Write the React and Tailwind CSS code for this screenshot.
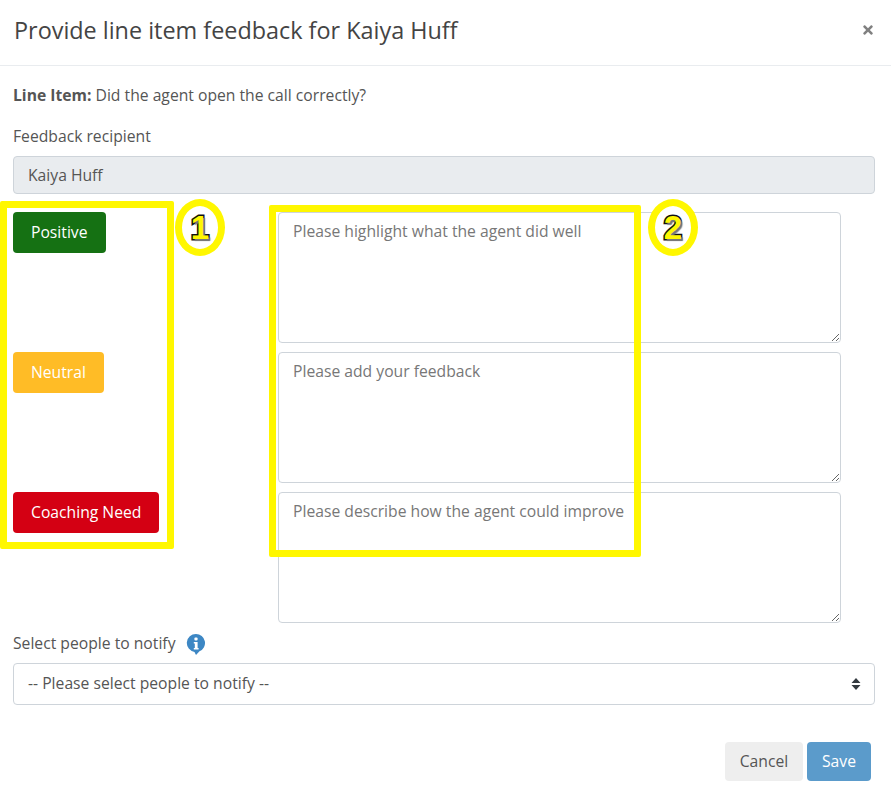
import React from 'react';
import { FaTimes } from 'react-icons/fa';

const rows = [
    { label: 'Positive', color: 'bg-[#157113]', placeholder: 'Please highlight what the agent did well' },
    { label: 'Neutral', color: 'bg-[#ffbc26]', placeholder: 'Please add your feedback' },
    { label: 'Coaching Need', color: 'bg-[#d40013]', placeholder: 'Please describe how the agent could improve' },
];

const Callout = ({ number, className }) => (
    <div className={`absolute w-[50px] h-[57px] rounded-[50%] border-[7px] border-[#fff700] bg-white flex items-center justify-center ${className}`}>
        <span className="font-['Liberation_Sans',sans-serif] font-bold text-[33px] leading-none text-[#fff700] [-webkit-text-stroke:3px_#111] [paint-order:stroke_fill] [text-shadow:2px_2px_1px_#777]">
            {number}
        </span>
    </div>
);

const App = () => {
    return (
        <div className="relative w-[891px] h-[795px] overflow-hidden bg-white text-[#555] text-[15.7px] font-['Open_Sans',sans-serif]">
            <div className="h-[66px] border-b border-[#e9ecef] pl-[14px] pr-[16px] flex items-center justify-between">
                <h1 className="text-[23.4px] text-[#444] font-normal mb-[3px]">Provide line item feedback for Kaiya Huff</h1>
                <FaTimes className="text-[#808080] text-[14px] mb-[6px]" />
            </div>

            <div className="px-[13px] pt-[17px]">
                <p className="leading-[24px] h-[24px]">
                    <strong className="font-bold">Line Item:</strong> Did the agent open the call correctly?
                </p>
                <label className="block mt-[17px] leading-[24px]">Feedback recipient</label>
                <div className="mt-[8px] h-[38px] w-[862px] rounded border border-[#ced4da] bg-[#e9ecef] px-[14px] pt-[1px] flex items-center">Kaiya Huff</div>

                <div className="mt-[18px] flex flex-col gap-[9px]">
                    {rows.map((row) => (
                        <div key={row.label} className="flex h-[131px]">
                            <div className="w-[265px]">
                                <button className={`${row.color} text-white font-medium h-[41px] px-[18px] rounded`}>{row.label}</button>
                            </div>
                            <textarea
                                placeholder={row.placeholder}
                                className="w-[563px] h-[131px] rounded border border-[#ced4da] px-[14px] py-[7px] resize-y outline-none placeholder:text-[#777]"
                            />
                        </div>
                    ))}
                </div>

                <div className="mt-[9px] flex items-center gap-[10px] h-[24px]">
                    <span>Select people to notify</span>
                    <svg width="20" height="22" viewBox="0 0 20 22">
                        <path d="M10 1a9 9 0 0 1 3.5 17.3L10 22l-1.5-3.1A9 9 0 0 1 10 1z" fill="#3d87c4" />
                        <rect x="8.4" y="4.5" width="3.2" height="3" rx="1" fill="#fff" />
                        <path d="M7.8 9h3.8v6h1v1.5H7.8V15h1v-4.5h-1z" fill="#fff" />
                    </svg>
                </div>
                <div className="relative mt-[7px] h-[42px] w-[862px] rounded border border-[#ced4da] px-[14px] flex items-center">
                    -- Please select people to notify --
                    <svg className="absolute right-[13px] top-[13px]" width="10" height="14" viewBox="0 0 10 14">
                        <path d="M5 1l4.5 5h-9zM5 13l4.5-5h-9z" fill="#343a40" />
                    </svg>
                </div>

                <div className="mt-[37px] pr-[7px] flex justify-end gap-[4px]">
                    <button className="h-[39px] w-[78px] rounded bg-[#eeeeee] text-[#555]">Cancel</button>
                    <button className="h-[39px] w-[64px] rounded bg-[#5b9bcb] text-white font-medium">Save</button>
                </div>
            </div>

            {/* yellow annotations drawn over the form */}
            <div className="absolute left-0 top-[201px] w-[174px] h-[348px] border-[7px] border-[#fff700] rounded-[2px] pointer-events-none" />
            <div className="absolute left-[269px] top-[205px] w-[372px] h-[352px] border-[7px] border-[#fff700] rounded-[2px] pointer-events-none" />
            <Callout number="1" className="left-[175px] top-[199px]" />
            <Callout number="2" className="left-[648px] top-[199px]" />
        </div>
    );
};

export default App;
